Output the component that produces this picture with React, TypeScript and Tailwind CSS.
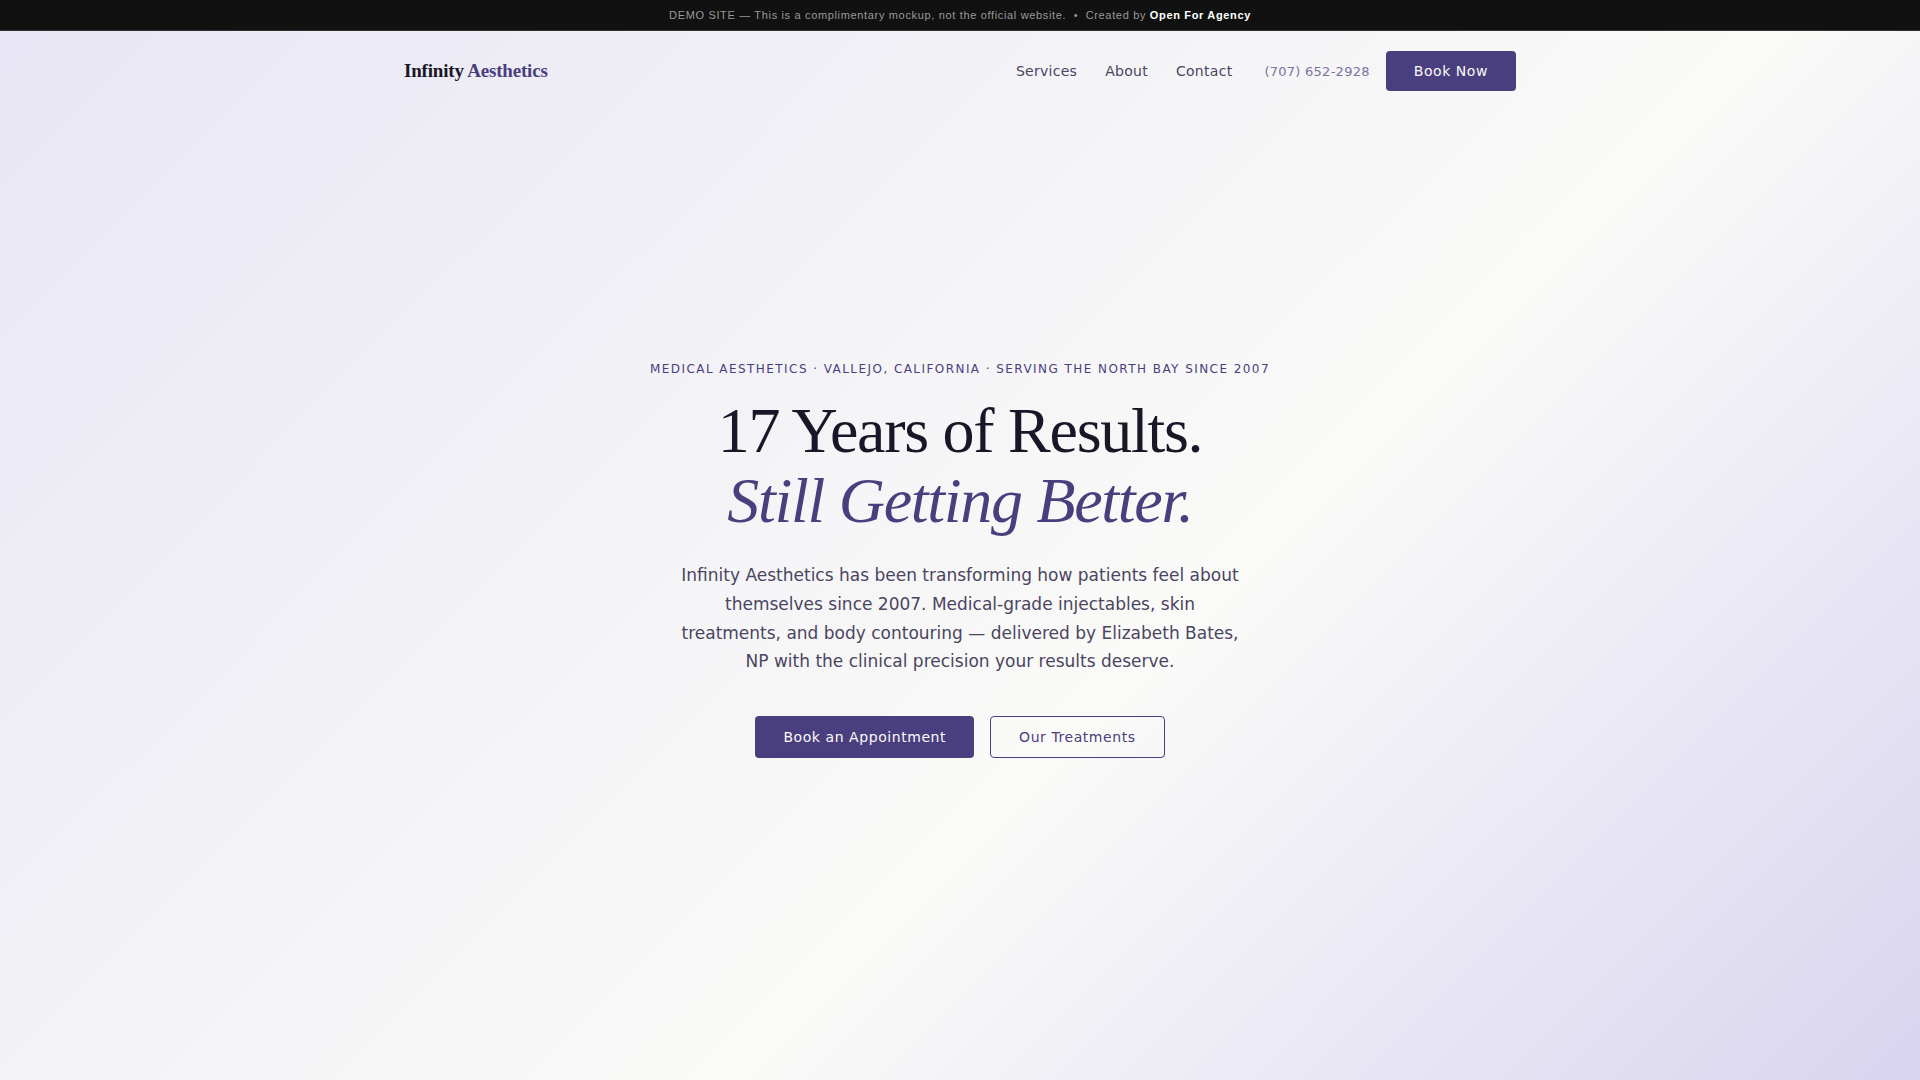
import clsx from 'clsx'
import type { ReactNode } from 'react'

const links = [
  { label: 'Services', href: '#services' },
  { label: 'About', href: '#about' },
  { label: 'Contact', href: '#contact' },
]

// shared button, filled or outlined
function Button({ children, outline, className }: { children: ReactNode; outline?: boolean; className?: string }) {
  return (
    <button
      type="button"
      className={clsx(
        'cursor-pointer rounded px-7 text-sm tracking-[0.04em]',
        outline ? 'border border-[#4a3f7e] text-[#4a3f7e]' : 'bg-[#4a3f7e] text-[#fafaf8]',
        className
      )}
    >
      {children}
    </button>
  )
}

function DemoBar() {
  return (
    <div className="border-b border-[#333] bg-[#111] px-4 py-1.5 text-center font-['Liberation_Sans',sans-serif] text-[11px] leading-[18px] tracking-[0.06em] text-[#999]">
      DEMO SITE — This is a complimentary mockup, not the official website. &nbsp;•&nbsp; Created by{' '}
      <a href="#agency" className="font-bold text-white">Open For Agency</a>
    </div>
  )
}

function Header() {
  return (
    <header className="mx-auto flex w-full max-w-[1160px] items-center justify-between px-6 py-5">
      <a href="#home" className="font-['Liberation_Serif',serif] text-[19px] font-bold tracking-[-0.01em] text-[#1a1628]">
        Infinity <span className="text-[#4a3f7e]">Aesthetics</span>
      </a>
      <div className="flex items-center gap-4">
        <nav className="mr-4 flex gap-7 text-sm tracking-[0.02em] text-[#4a4560]">
          {links.map((link) => (
            <a key={link.label} href={link.href}>{link.label}</a>
          ))}
        </nav>
        <a href="tel:+17076522928" className="text-[13px] leading-[21px] tracking-[0.02em] text-[#7a74a0]">(707) 652-2928</a>
        <Button className="h-10">Book Now</Button>
      </div>
    </header>
  )
}

function Hero() {
  return (
    <main className="flex flex-1 flex-col items-center justify-center px-6 pb-[74px] text-center">
      <p className="mb-[17px] text-xs leading-5 tracking-[0.12em] text-[#4a3f7e] uppercase">
        Medical Aesthetics · Vallejo, California · Serving the North Bay Since 2007
      </p>
      <h1 className="mb-[25px] font-['Liberation_Serif',serif] text-[64px] leading-[70px] tracking-[-0.02em] text-[#1a1628]">
        17 Years of Results.
        <br />
        <em className="text-[#4a3f7e]">Still Getting Better.</em>
      </h1>
      <p className="mb-10 max-w-[560px] text-[17px] leading-[1.7] text-[#4a4560]">
        Infinity Aesthetics has been transforming how patients feel about themselves since 2007.
        Medical-grade injectables, skin treatments, and body contouring — delivered by Elizabeth
        Bates, NP with the clinical precision your results deserve.
      </p>
      <div className="flex flex-wrap justify-center gap-4">
        <Button className="h-[42px]">Book an Appointment</Button>
        <Button outline className="h-[42px]">Our Treatments</Button>
      </div>
    </main>
  )
}

export default function App() {
  return (
    <div className="flex min-h-screen flex-col font-['DejaVu_Sans',sans-serif]">
      <DemoBar />
      <div className="flex flex-1 flex-col bg-[linear-gradient(135deg,#e8e6f4_0%,#fafaf8_60%,#d8d4f0_100%)]">
        <Header />
        <Hero />
      </div>
    </div>
  )
}
